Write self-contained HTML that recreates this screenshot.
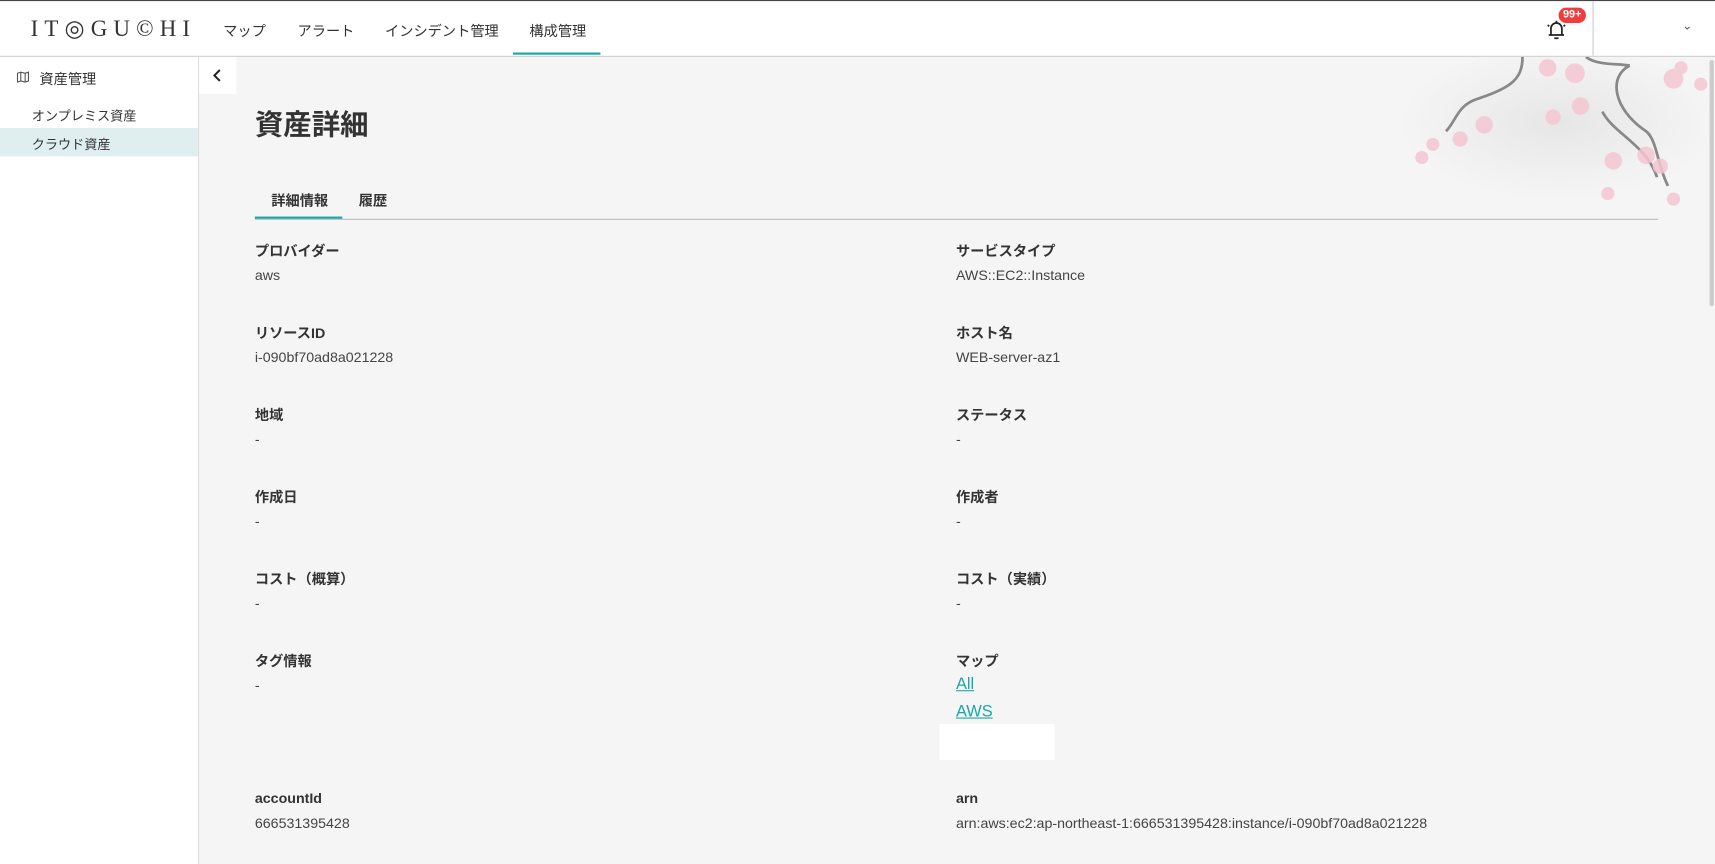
<!DOCTYPE html>
<html><head><meta charset="utf-8">
<style>
html,body{margin:0;padding:0;width:1715px;height:864px;overflow:hidden;background:#f5f5f5}
#w{position:absolute;left:0;top:0;width:1568px;height:790px;transform:scale(1.09375);transform-origin:0 0;font-family:"Liberation Sans","Noto Sans CJK JP",sans-serif;color:#333}
.hdr{position:absolute;left:0;top:0;width:1568px;height:50px;background:#fff;border-top:1px solid #444;border-bottom:1px solid #ccc;box-sizing:content-box}
.logo{position:absolute;left:28px;top:13px;font-family:"Liberation Serif",serif;font-size:21px;letter-spacing:5.6px;color:#333}
.nav{position:absolute;top:17px;font-size:13px;color:#333}
.ul{position:absolute;left:469px;top:47px;width:80px;height:2px;background:#1aa7a8}
.side{position:absolute;left:0;top:52px;width:181px;height:738px;background:#fff;border-right:1px solid #ddd}
.lab{position:absolute;font-size:13px;font-weight:bold;color:#333}
.val{position:absolute;font-size:13px;color:#444}
a{color:#1aa7a8;text-decoration:underline;font-size:15px;position:absolute}
</style></head><body><div id="w">
<div class="hdr">
<div class="logo">IT◎GU©HI</div>
<div class="nav" style="left:204px">マップ</div>
<div class="nav" style="left:272px">アラート</div>
<div class="nav" style="left:352px">インシデント管理</div>
<div class="nav" style="left:484px">構成管理</div>
<div class="ul"></div>
<svg style="position:absolute;left:1412px;top:15px" width="22" height="22" viewBox="0 0 22 22" fill="none" stroke="#222" stroke-width="1.6"><path d="M6 16V10a5 5 0 0110 0v6M4 16h14M9 19h4M11 3v2M3 7l1.5 1M19 7l-1.5 1"/></svg>
<div style="position:absolute;left:1425px;top:6px;background:#f03c3c;color:#fff;font-size:10px;font-weight:bold;border-radius:8px;padding:1px 4px;line-height:12px">99+</div>
<div style="position:absolute;left:1456px;top:0;width:1px;height:50px;background:#ccc"></div>
<div style="position:absolute;left:1538px;top:16px;font-size:11px;color:#555">⌄</div>
</div>
<div class="side">
<svg style="position:absolute;left:15px;top:13px" width="12" height="11" viewBox="0 0 12 11" fill="none" stroke="#555"><path d="M1 2l3-1 4 1 3-1v8l-3 1-4-1-3 1zM4 1v8M8 2v8"/></svg>
<div style="position:absolute;left:36px;top:10px;font-size:13px">資産管理</div>
<div style="position:absolute;left:29px;top:45px;font-size:12px">オンプレミス資産</div>
<div style="position:absolute;left:0;top:65px;width:181px;height:26px;background:#dfeff0"></div>
<div style="position:absolute;left:29px;top:71px;font-size:12px">クラウド資産</div>
</div>
<div style="position:absolute;left:182px;top:52px;width:34px;height:34px;background:#fff"></div>
<svg style="position:absolute;left:194px;top:63px" width="10" height="12" viewBox="0 0 10 12" fill="none" stroke="#222" stroke-width="1.8"><path d="M7 1L2 6l5 5"/></svg>
<svg style="position:absolute;left:1275px;top:52px" width="290" height="140" viewBox="0 0 290 140">
<defs><radialGradient id="g"><stop offset="0" stop-color="#e6e6e6"/><stop offset="1" stop-color="#f5f5f5"/></radialGradient></defs>
<ellipse cx="150" cy="60" rx="145" ry="70" fill="url(#g)"/>
<g stroke="#888" stroke-width="2.5" fill="none"><path d="M117 0c0 20-10 28-40 38-20 6-20 20-30 30"/><path d="M175 0c10 8 30 6 40 8M215 8c-20 10-15 40 15 60 10 8 10 30 20 50M190 50c10 20 40 30 50 60"/></g>
<g fill="#f4c6d2" opacity=".85"><circle cx="82" cy="62" r="8"/><circle cx="60" cy="75" r="7"/><circle cx="35" cy="80" r="6"/><circle cx="25" cy="92" r="6"/><circle cx="140" cy="10" r="8"/><circle cx="165" cy="15" r="9"/><circle cx="170" cy="45" r="8"/><circle cx="145" cy="55" r="7"/><circle cx="255" cy="20" r="9"/><circle cx="280" cy="25" r="6"/><circle cx="230" cy="90" r="8"/><circle cx="243" cy="100" r="7"/><circle cx="200" cy="95" r="8"/><circle cx="195" cy="125" r="6"/><circle cx="255" cy="130" r="6"/><circle cx="262" cy="10" r="6"/></g>
</svg>
<div style="position:absolute;left:233px;top:94px;font-size:26px;font-weight:bold;color:#333">資産詳細</div>
<div style="position:absolute;left:248px;top:173px;font-size:13px;font-weight:bold">詳細情報</div>
<div style="position:absolute;left:328px;top:173px;font-size:13px;font-weight:bold">履歴</div>
<div style="position:absolute;left:233px;top:200px;width:1283px;height:1px;background:#bbb"></div>
<div style="position:absolute;left:233px;top:198px;width:80px;height:2px;background:#1aa7a8"></div>
<div class="lab" style="left:233px;top:219px">プロバイダー</div><div class="val" style="left:233px;top:244px">aws</div>
<div class="lab" style="left:874px;top:219px">サービスタイプ</div><div class="val" style="left:874px;top:244px">AWS::EC2::Instance</div>
<div class="lab" style="left:233px;top:294px">リソースID</div><div class="val" style="left:233px;top:319px">i-090bf70ad8a021228</div>
<div class="lab" style="left:874px;top:294px">ホスト名</div><div class="val" style="left:874px;top:319px">WEB-server-az1</div>
<div class="lab" style="left:233px;top:369px">地域</div><div class="val" style="left:233px;top:394px">-</div>
<div class="lab" style="left:874px;top:369px">ステータス</div><div class="val" style="left:874px;top:394px">-</div>
<div class="lab" style="left:233px;top:444px">作成日</div><div class="val" style="left:233px;top:469px">-</div>
<div class="lab" style="left:874px;top:444px">作成者</div><div class="val" style="left:874px;top:469px">-</div>
<div class="lab" style="left:233px;top:519px">コスト（概算）</div><div class="val" style="left:233px;top:544px">-</div>
<div class="lab" style="left:874px;top:519px">コスト（実績）</div><div class="val" style="left:874px;top:544px">-</div>
<div class="lab" style="left:233px;top:594px">タグ情報</div><div class="val" style="left:233px;top:619px">-</div>
<div class="lab" style="left:874px;top:594px">マップ</div>
<a style="left:874px;top:617px">All</a><a style="left:874px;top:642px">AWS</a>
<div style="position:absolute;left:859px;top:662px;width:105px;height:33px;background:#fff"></div>
<div class="lab" style="left:233px;top:722px">accountId</div><div class="val" style="left:233px;top:745px">666531395428</div>
<div class="lab" style="left:874px;top:722px">arn</div><div class="val" style="left:874px;top:745px">arn:aws:ec2:ap-northeast-1:666531395428:instance/i-090bf70ad8a021228</div>
<div style="position:absolute;left:1563px;top:55px;width:4px;height:225px;background:#ccc;border-radius:2px"></div>
</div></body></html>
